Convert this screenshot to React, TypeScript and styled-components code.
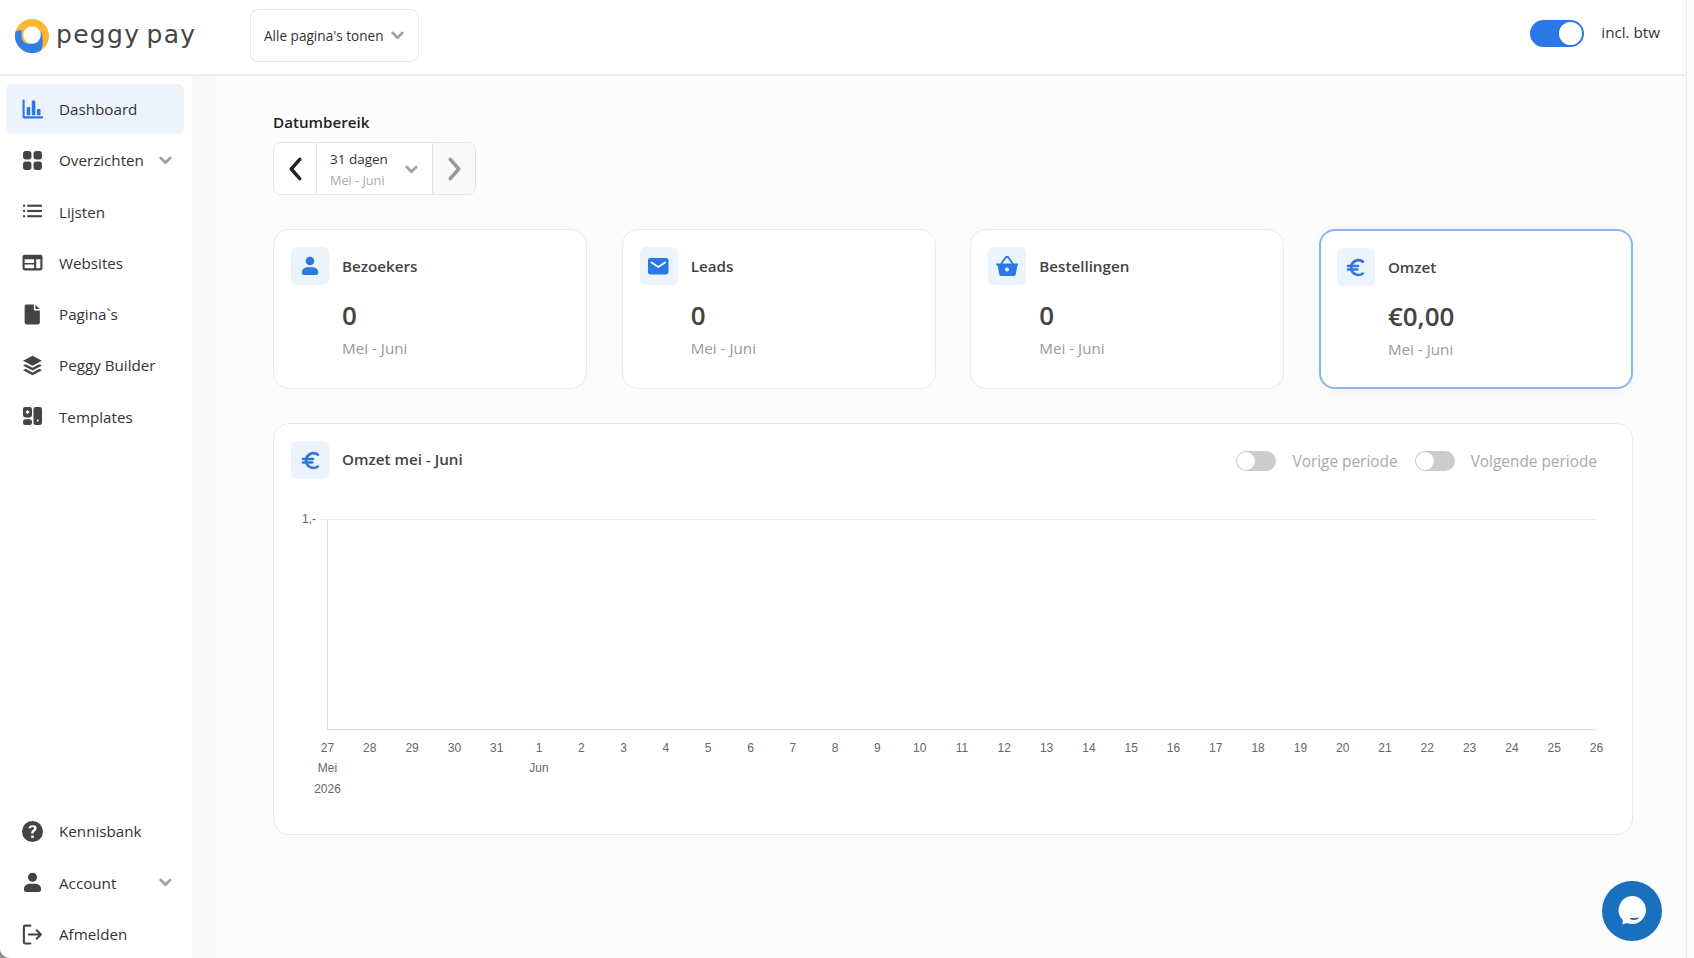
import React from "react";
import styled, { createGlobalStyle } from "styled-components";

const Global = createGlobalStyle`
  html, body { margin: 0; padding: 0; height: 100%; overflow: hidden; }
  body { font-family: "Open Sans", "Liberation Sans", sans-serif; color: #333; background: #8f8f8f; }
  * { box-sizing: border-box; }
`;

const Shell = styled.div`
  display: flex;
  width: 1694px;
  height: 958px;
`;
const Win = styled.div`
  width: 1686px;
  height: 958px;
  display: flex;
  flex-direction: column;
  background: #fff;
  border-bottom-left-radius: 10px;
  overflow: hidden;
`;
const Strip = styled.div`
  width: 8px;
  background: #fcfcfc;
  border-left: 1px solid #ececec;
`;
const Topbar = styled.header`
  height: 76px;
  flex: none;
  display: flex;
  align-items: center;
  border-bottom: 2px solid #ececec;
  background: #fff;
  padding-right: 26px;
`;
const LogoWrap = styled.div`
  width: 250px;
  flex: none;
  display: flex;
  align-items: center;
  gap: 7px;
  padding: 0 0 0 15px;
  margin-top: -2px;
`;
const LogoText = styled.span`
  font-family: "DejaVu Sans", sans-serif;
  font-size: 25px;
  line-height: 36px;
  color: #454545;
  letter-spacing: 1.3px;
  word-spacing: -3px;
  white-space: nowrap;
  margin-top: -3px;
`;
const SelectBox = styled.div`
  width: 169px;
  height: 53px;
  margin-top: -3px;
  border: 1px solid #e6e6e6;
  border-radius: 8px;
  display: flex;
  align-items: center;
  gap: 7px;
  padding-left: 13px;
  font-size: 13.6px;
  color: #333;
  white-space: nowrap;
`;
const Spacer = styled.div`
  flex: 1;
`;
const BigToggle = styled.div`
  width: 54px;
  height: 27px;
  border-radius: 14px;
  background: #2a78e4;
  display: flex;
  justify-content: flex-end;
  align-items: center;
  padding-right: 2px;
  margin-top: -8px;
`;
const BigKnob = styled.div`
  width: 23px;
  height: 23px;
  border-radius: 50%;
  background: #fff;
`;
const BtwLabel = styled.span`
  font-size: 15.2px;
  color: #333;
  margin-left: 17px;
  margin-top: -10px;
`;
const Body = styled.div`
  flex: 1;
  display: flex;
  min-height: 0;
`;
const Sidebar = styled.nav`
  width: 192px;
  flex: none;
  background: #fff;
  display: flex;
  flex-direction: column;
  justify-content: space-between;
  padding: 8px 8px 0 6px;
  margin-bottom: -1px;
`;
const NavGroup = styled.div`
  display: flex;
  flex-direction: column;
  gap: 1.3px;
`;
const NavItem = styled.div<{ $active?: boolean }>`
  height: 50px;
  display: flex;
  align-items: center;
  padding: 0 12px 0 16px;
  border-radius: 6px;
  font-size: 15.2px;
  color: #333;
  background: ${(p) => (p.$active ? "#edf3fb" : "transparent")};
`;
const NavIcon = styled.span<{ $active?: boolean }>`
  width: 21px;
  height: 21px;
  flex: none;
  margin-right: 16px;
  display: flex;
  align-items: center;
  justify-content: center;
  color: ${(p) => (p.$active ? "#2a78e4" : "#444")};
  svg { display: block; }
`;
const NavLabel = styled.span`
  flex: 1;
  white-space: nowrap;
`;
const Main = styled.main`
  flex: 1;
  min-width: 0;
  background: linear-gradient(to right, #f7f7f7 0, #fcfcfc 28px);
  padding: 35px 53px 0 81px;
`;
const RangeLabel = styled.div`
  font-size: 15.2px;
  line-height: 22px;
  font-weight: 600;
  color: #222;
  margin-bottom: 9px;
`;
const RangeGroup = styled.div`
  width: 203px;
  height: 53px;
  display: flex;
  border: 1px solid #e5e5e5;
  border-radius: 8px;
  background: #fff;
  overflow: hidden;
`;
const RangeArrow = styled.div<{ $off?: boolean }>`
  width: 42px;
  flex: none;
  display: flex;
  align-items: center;
  justify-content: center;
  background: ${(p) => (p.$off ? "#f9f9f9" : "#fff")};
  color: ${(p) => (p.$off ? "#999" : "#222")};
`;
const RangeMid = styled.div`
  flex: 1;
  border-left: 1px solid #e5e5e5;
  border-right: 1px solid #e5e5e5;
  display: flex;
  align-items: center;
  justify-content: space-between;
  padding: 2px 14px 0 13px;
`;
const RangeText = styled.div`
  display: flex;
  flex-direction: column;
  gap: 2px;
`;
const RangeTop = styled.span`
  font-size: 13.5px;
  line-height: 20px;
  color: #333;
`;
const RangeSub = styled.span`
  font-size: 12.7px;
  line-height: 19px;
  color: #aaa;
`;
const Cards = styled.section`
  display: grid;
  grid-template-columns: repeat(4, 1fr);
  gap: 34.5px;
  margin-top: 34px;
`;
const Card = styled.article<{ $active?: boolean }>`
  height: 160px;
  background: #fff;
  border: ${(p) => (p.$active ? "2px solid #8ab6f0" : "1px solid #ebebeb")};
  border-radius: 16px;
  padding: 17px ${(p) => (p.$active ? "16px" : "17px")};
  box-shadow: ${(p) => (p.$active ? "0 2px 10px rgba(0,0,0,0.06)" : "none")};
`;
const CardHead = styled.div`
  display: flex;
  align-items: center;
  gap: 13px;
`;
const IconBox = styled.div`
  width: 38px;
  height: 38px;
  flex: none;
  border-radius: 6px;
  background: #edf3fb;
  display: flex;
  align-items: center;
  justify-content: center;
  color: #2a78e4;
`;
const CardTitle = styled.h3`
  margin: 0;
  font-size: 15.2px;
  font-weight: 600;
  color: #444;
`;
const CardValue = styled.div`
  margin: 12px 0 0 51px;
  font-size: 26px;
  line-height: 36px;
  font-weight: 600;
  color: #444;
`;
const CardSub = styled.div`
  margin: 4px 0 0 51px;
  font-size: 15.2px;
  line-height: 22px;
  color: #999;
`;
const ChartCard = styled.section`
  height: 412px;
  margin-top: 34px;
  background: #fff;
  border: 1px solid #ebebeb;
  border-radius: 16px;
`;
const ChartHead = styled.div`
  display: flex;
  align-items: center;
  gap: 13px;
  padding: 17px 35px 11px 17px;
`;
const ChartTitle = styled(CardTitle)`
  flex: 1;
  margin-top: -3px;
`;
const Switches = styled.div`
  display: flex;
  align-items: center;
  margin-top: 2px;
`;
const SmallToggle = styled.div`
  width: 40px;
  height: 20px;
  border-radius: 10px;
  background: #ccc;
  padding: 1px;
`;
const SmallKnob = styled.div`
  width: 18px;
  height: 18px;
  border-radius: 50%;
  background: #fff;
`;
const SwitchLabel = styled.span`
  font-size: 15.4px;
  color: #aaa;
  margin: 0 17px 0 16px;
  &:last-child { margin-right: 0; }
`;
const ChartSvg = styled.svg`
  display: block;
  text {
    font-family: "Liberation Sans", Arial, sans-serif;
    font-size: 12px;
    fill: #666;
    text-anchor: middle;
  }
`;
const ChatBubble = styled.button`
  position: fixed;
  left: 1602px;
  top: 881px;
  width: 60px;
  height: 60px;
  padding: 0;
  border: 0;
  border-radius: 50%;
  background: #1a6fbf;
  display: flex;
  align-items: center;
  justify-content: center;
`;

const Chevron = ({ size = 13, color = "#a3a3a3" }: { size?: number; color?: string }) => (
  <svg width={size} height={size * 0.72} viewBox="0 0 13 9" fill="none" style={{ flex: "none" }}>
    <path d="M1.8 1.8 6.5 6.5 11.2 1.8" stroke={color} strokeWidth="2.8" strokeLinecap="round" strokeLinejoin="round" />
  </svg>
);

const Logo = () => (
  <svg width="34" height="34" viewBox="0 0 34 34">
    <circle cx="17" cy="17" r="17" fill="#fbb731" />
    <path d="M.8 12A17 17 0 0 0 26 31.500C28 27 28.500 18 26 12 24 24 12 28 8 22 6 18 6 14 7 11Z" fill="#2f7fe6" />
    <circle cx="17" cy="16" r="8.800" fill="#fff" />
  </svg>
);

const Ic = ({ children, size = 21, vb = 20 }: { children: React.ReactNode; size?: number; vb?: number }) => (
  <svg width={size} height={size} viewBox={`0 0 ${vb} ${vb}`} fill="currentColor">
    {children}
  </svg>
);

const BarsIcon = () => (
  <Ic>
    <path d="M.5 1.500a1 1 0 0 1 2 0V16.500h16.800a1 1 0 0 1 0 2H1.800A1.300 1.300 0 0 1 .5 17.200Z" />
    <rect x="4.500" y="7.500" width="3.400" height="8" rx=".8" />
    <rect x="9.300" y="1.500" width="3.400" height="14" rx=".8" />
    <rect x="14.200" y="9.500" width="3.400" height="6" rx=".8" />
  </Ic>
);
const GridIcon = () => (
  <Ic>
    <rect x="1" y="1" width="8" height="8" rx="2.600" />
    <rect x="11" y="1" width="8" height="8" rx="2.600" />
    <rect x="1" y="11" width="8" height="8" rx="2.600" />
    <rect x="11" y="11" width="8" height="8" rx="2.600" />
  </Ic>
);
const ListIcon = () => (
  <Ic>
    <rect x="1" y="3.500" width="2" height="2" />
    <rect x="1" y="8.500" width="2" height="2" />
    <rect x="1" y="13.500" width="2" height="2" />
    <rect x="5" y="3.500" width="14" height="2" />
    <rect x="5" y="8.500" width="14" height="2" />
    <rect x="5" y="13.500" width="14" height="2" />
  </Ic>
);
const WebIcon = () => (
  <Ic>
    <path
      fillRule="evenodd"
      d="M2.500 2.500h15A2 2 0 0 1 19.500 4.500v11a2 2 0 0 1-2 2h-15a2 2 0 0 1-2-2v-11a2 2 0 0 1 2-2ZM2.500 7v8.500h9V12H2.500v-1.500h9V7Zm11 0v8.500h4V7Z"
    />
  </Ic>
);
const FileIcon = () => (
  <Ic>
    <path d="M4.500 .5h6.800v4.500a1.200 1.200 0 0 0 1.200 1.200H17V17.500a2 2 0 0 1-2 2H4.500a2 2 0 0 1-2-2v-15a2 2 0 0 1 2-2Z" />
    <path d="M12.800.8 16.800 4.800h-4Z" />
  </Ic>
);
const LayersIcon = () => (
  <Ic>
    <path d="M10 .8 19 5.500 10 10.200 1 5.500Z" />
    <path d="M3.400 8.700 10 12.200 16.600 8.700 19 10 10 14.700 1 10Z" />
    <path d="M3.400 13.200 10 16.700 16.600 13.200 19 14.500 10 19.200 1 14.500Z" />
  </Ic>
);
const TemplateIcon = () => (
  <svg width="23" height="23" viewBox="0 0 22 22" fill="currentColor">
    <path
      fillRule="evenodd"
      d="M3.500 1h4.500A2.500 2.500 0 0 1 10.500 3.500v6A2.500 2.500 0 0 1 8 12H3.500A2.500 2.500 0 0 1 1 9.500v-6A2.500 2.500 0 0 1 3.500 1Zm2.300 3.200L3.600 6.400l2.200 2.200L8 6.400Z"
    />
    <rect x="1" y="14" width="9.500" height="6" rx="2.500" />
    <path
      fillRule="evenodd"
      d="M14.500 1h4A2.500 2.500 0 0 1 21 3.500v14a2.500 2.500 0 0 1-2.500 2.500h-4a2.500 2.500 0 0 1-2.500-2.500v-14A2.500 2.500 0 0 1 14.500 1Zm2 13-1.300 1.300 1.300 1.300 1.300-1.300Z"
    />
  </svg>
);
const HelpIcon = () => (
  <Ic>
    <path
      fillRule="evenodd"
      d="M10 0a10 10 0 1 1 0 20 10 10 0 0 1 0-20Zm-1.200 13.800v2.400h2.400v-2.400Zm1.300-10c-2.200 0-3.700 1.200-3.900 3.200h2.300c.1-.8.700-1.200 1.500-1.200.8 0 1.400.5 1.400 1.200 0 .6-.3 1-1.100 1.500-1.100.7-1.600 1.400-1.500 2.800v.5h2.300v-.4c0-.7.200-1 1.100-1.600 1.100-.7 1.700-1.600 1.700-2.900 0-2-1.600-3.100-4.100-3.100Z"
    />
  </Ic>
);
const PersonIcon = ({ size = 21 }: { size?: number }) => (
  <Ic size={size}>
    <circle cx="10" cy="5" r="4.300" />
    <path d="M1.800 16.500c0-3.200 2.600-5.300 5.500-5.300h5.400c2.900 0 5.500 2.100 5.500 5.300v.5a2 2 0 0 1-2 2H3.800a2 2 0 0 1-2-2Z" />
  </Ic>
);
const LogoutIcon = () => (
  <svg width="21" height="21" viewBox="0 0 20 20" fill="none" stroke="currentColor" strokeWidth="2" strokeLinecap="round" strokeLinejoin="round">
    <path d="M8 1.500H3a1.200 1.200 0 0 0-1.200 1.200v14.600A1.200 1.200 0 0 0 3 18.500h5" />
    <path d="M6.500 10H18M14 6l4 4-4 4" />
  </svg>
);
const MailIcon = () => (
  <svg width="21" height="17" viewBox="0 0 21 17">
    <rect width="20.500" height="16.500" rx="2.400" fill="#2a78e4" />
    <path d="M3.500 4.500 10.250 9 17 4.500" stroke="#fff" strokeWidth="1.800" fill="none" strokeLinecap="round" />
  </svg>
);
const BasketIcon = () => (
  <svg width="22" height="20" viewBox="0 0 22 20" fill="#2a78e4">
    <path fillRule="evenodd" d="M.8 7.500h20.400a.8.800 0 0 1 .8 1l-.6 1.200-1.600 8.500a2 2 0 0 1-2 1.800H5.200a2 2 0 0 1-2-1.800L1.600 9.700 0 8.500a.8.800 0 0 1 .8-1ZM11 11.500a2 2 0 1 0 0 4 2 2 0 0 0 0-4Z" />
    <path d="M5 8 10 1h2l5 7" fill="none" stroke="#2a78e4" strokeWidth="1.900" strokeLinejoin="round" />
  </svg>
);
const EuroIcon = () => (
  <svg width="19" height="19" viewBox="0 0 22 22" fill="none" stroke="#2a78e4" strokeWidth="3" strokeLinecap="round">
    <path d="M19.500 4.200A8.500 8.500 0 0 0 6 11a8.500 8.500 0 0 0 13.500 7" />
    <path d="M2.300 9.200H14M2.300 13.300H13" />
  </svg>
);
const ArrowLeft = () => (
  <svg width="15" height="26" viewBox="0 0 14 24" fill="none" stroke="currentColor" strokeWidth="3.200" strokeLinecap="round" strokeLinejoin="round">
    <path d="M11 3 3 12l8 9" />
  </svg>
);
const ArrowRight = () => (
  <svg width="15" height="26" viewBox="0 0 14 24" fill="none" stroke="currentColor" strokeWidth="3.200" strokeLinecap="round" strokeLinejoin="round">
    <path d="M3 3l8 9-8 9" />
  </svg>
);

const topNav = [
  { label: "Dashboard", icon: <BarsIcon />, active: true },
  { label: "Overzichten", icon: <GridIcon />, chevron: true },
  { label: "Lijsten", icon: <ListIcon /> },
  { label: "Websites", icon: <WebIcon /> },
  { label: "Pagina`s", icon: <FileIcon /> },
  { label: "Peggy Builder", icon: <LayersIcon /> },
  { label: "Templates", icon: <TemplateIcon /> },
];
const bottomNav = [
  { label: "Kennisbank", icon: <HelpIcon /> },
  { label: "Account", icon: <PersonIcon />, chevron: true },
  { label: "Afmelden", icon: <LogoutIcon /> },
];

const stats = [
  { title: "Bezoekers", value: "0", icon: <PersonIcon size={20} /> },
  { title: "Leads", value: "0", icon: <MailIcon /> },
  { title: "Bestellingen", value: "0", icon: <BasketIcon /> },
  { title: "Omzet", value: "€0,00", icon: <EuroIcon />, active: true },
];

const days = [27, 28, 29, 30, 31, 1, 2, 3, 4, 5, 6, 7, 8, 9, 10, 11, 12, 13, 14, 15, 16, 17, 18, 19, 20, 21, 22, 23, 24, 25, 26];
const X0 = 327.5;
const STEP = 42.3;

const Nav = ({ items }: { items: { label: string; icon: React.ReactNode; active?: boolean; chevron?: boolean }[] }) => (
  <NavGroup>
    {items.map((it) => (
      <NavItem key={it.label} $active={it.active}>
        <NavIcon $active={it.active}>{it.icon}</NavIcon>
        <NavLabel>{it.label}</NavLabel>
        {it.chevron && <Chevron />}
      </NavItem>
    ))}
  </NavGroup>
);

export default function App() {
  return (
    <Shell>
      <Global />
      <Win>
        <Topbar>
          <LogoWrap>
            <Logo />
            <LogoText>peggy pay</LogoText>
          </LogoWrap>
          <SelectBox>
            Alle pagina's tonen <Chevron />
          </SelectBox>
          <Spacer />
          <BigToggle>
            <BigKnob />
          </BigToggle>
          <BtwLabel>incl. btw</BtwLabel>
        </Topbar>
        <Body>
          <Sidebar>
            <Nav items={topNav} />
            <Nav items={bottomNav} />
          </Sidebar>
          <Main>
            <RangeLabel>Datumbereik</RangeLabel>
            <RangeGroup>
              <RangeArrow>
                <ArrowLeft />
              </RangeArrow>
              <RangeMid>
                <RangeText>
                  <RangeTop>31 dagen</RangeTop>
                  <RangeSub>Mei - Juni</RangeSub>
                </RangeText>
                <Chevron />
              </RangeMid>
              <RangeArrow $off>
                <ArrowRight />
              </RangeArrow>
            </RangeGroup>
            <Cards>
              {stats.map((s) => (
                <Card key={s.title} $active={s.active}>
                  <CardHead>
                    <IconBox>{s.icon}</IconBox>
                    <CardTitle>{s.title}</CardTitle>
                  </CardHead>
                  <CardValue>{s.value}</CardValue>
                  <CardSub>Mei - Juni</CardSub>
                </Card>
              ))}
            </Cards>
            <ChartCard>
              <ChartHead>
                <IconBox>
                  <EuroIcon />
                </IconBox>
                <ChartTitle>Omzet mei - Juni</ChartTitle>
                <Switches>
                  <SmallToggle>
                    <SmallKnob />
                  </SmallToggle>
                  <SwitchLabel>Vorige periode</SwitchLabel>
                  <SmallToggle>
                    <SmallKnob />
                  </SmallToggle>
                  <SwitchLabel>Volgende periode</SwitchLabel>
                </Switches>
              </ChartHead>
              <ChartSvg width="1358" height="310" viewBox="274 490 1358 310">
                <line x1="320" y1="519.5" x2="1596" y2="519.5" stroke="#eeeeee" />
                <line x1="327.500" y1="519" x2="327.500" y2="729.500" stroke="#dddddd" />
                <line x1="327" y1="729.500" x2="1596" y2="729.500" stroke="#dddddd" />
                <text x="309" y="523">1,-</text>
                {days.map((d, i) => (
                  <text key={i} x={X0 + i * STEP} y="752">
                    {d}
                  </text>
                ))}
                <text x={X0} y="772">Mei</text>
                <text x={X0 + 5 * STEP} y="772">Jun</text>
                <text x={X0} y="793">2026</text>
              </ChartSvg>
            </ChartCard>
          </Main>
        </Body>
      </Win>
      <Strip />
      <ChatBubble aria-label="chat">
        <svg width="30" height="32" viewBox="0 0 30 32">
          <path d="M15 1a14 14 0 1 1-5.500 26.900L5.500 29.500 5.900 25A14 14 0 0 1 15 1Z" fill="#fff" />
          <path d="M13 23.500c2.500 1.500 6 1.500 8.500-.5-2.500.4-6 .6-8.500.5Z" fill="#1a6fbf" stroke="#1a6fbf" />
        </svg>
      </ChatBubble>
    </Shell>
  );
}
